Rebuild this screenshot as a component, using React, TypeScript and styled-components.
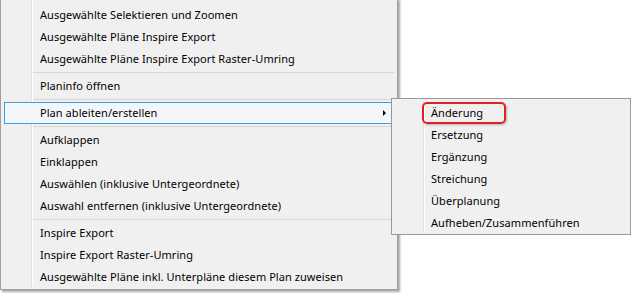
import React from "react";
import styled, { createGlobalStyle } from "styled-components";

const GlobalStyle = createGlobalStyle`
  html, body {
    margin: 0;
    padding: 0;
    background: #ffffff;
  }
  body {
    font-family: "Noto Sans", "Open Sans", sans-serif;
    font-size: 11px;
    letter-spacing: 0.06px;
    color: #000;
  }
`;

type Entry = { label: string; sub?: boolean; active?: boolean } | "sep";

const mainEntries: Entry[] = [
  { label: "Ausgewählte Selektieren und Zoomen" },
  { label: "Ausgewählte Pläne Inspire Export" },
  { label: "Ausgewählte Pläne Inspire Export Raster-Umring" },
  "sep",
  { label: "Planinfo öffnen" },
  "sep",
  { label: "Plan ableiten/erstellen", sub: true, active: true },
  "sep",
  { label: "Aufklappen" },
  { label: "Einklappen" },
  { label: "Auswählen (inklusive Untergeordnete)" },
  { label: "Auswahl entfernen (inklusive Untergeordnete)" },
  "sep",
  { label: "Inspire Export" },
  { label: "Inspire Export Raster-Umring" },
  { label: "Ausgewählte Pläne inkl. Unterpläne diesem Plan zuweisen" },
];

const subEntries = [
  "Änderung",
  "Ersetzung",
  "Ergänzung",
  "Streichung",
  "Überplanung",
  "Aufheben/Zusammenführen",
];

const App: React.FC = () => {
  return (
    <Screen>
      <GlobalStyle />
      <MainMenu>
        <Gutter $left={28} />
        {mainEntries.map((e, i) =>
          e === "sep" ? (
            <Separator key={i} />
          ) : (
            <Item key={i} $active={e.active}>
              <Label>{e.label}</Label>
              {e.sub && <Arrow />}
            </Item>
          )
        )}
      </MainMenu>
      <SubMenu>
        <Gutter $left={29} />
        {subEntries.map((label, i) => (
          <SubItem key={label}>
            {i === 0 && <Marker />}
            <Label>{label}</Label>
          </SubItem>
        ))}
      </SubMenu>
    </Screen>
  );
};

export default App;

const Screen = styled.div`
  display: flex;
  align-items: flex-start;
  width: 634px;
  height: 295px;
  overflow: hidden;
`;

const MainMenu = styled.div`
  position: relative;
  flex: none;
  width: 396px;
  margin-top: -2px;
  padding: 5px 0 1px;
  background: #f0f0f0;
  border: 1px solid #a0a0a0;
  box-shadow: 2px 2px 2px rgba(0, 0, 0, 0.35);
`;

const Gutter = styled.div<{ $left: number }>`
  position: absolute;
  top: 2px;
  bottom: 2px;
  left: ${(p) => p.$left + 2}px;
  width: 1px;
  background: #e2e2e2;
  border-right: 1px solid #ffffff;
`;

const Item = styled.div<{ $active?: boolean }>`
  position: relative;
  display: flex;
  align-items: center;
  height: 22px;
  box-sizing: border-box;
  margin: 0 4px 0 3px;
  padding: 0 6px 0 35px;
  border: 1px solid ${(p) => (p.$active ? "#3d9ee0" : "transparent")};
  background: ${(p) => (p.$active ? "#f4f7f9" : "transparent")};
`;

const Label = styled.span`
  white-space: nowrap;
  line-height: 22px;
  margin-top: -1px;
`;

const Arrow = styled.span`
  margin-left: auto;
  width: 0;
  height: 0;
  border-top: 3px solid transparent;
  border-bottom: 3px solid transparent;
  border-left: 3px solid #000;
`;

const Separator = styled.div`
  height: 5px;
  margin-left: 32px;
  margin-right: 3px;
  display: flex;
  align-items: center;

  &::after {
    content: "";
    flex: 1;
    height: 1px;
    background: #d7d7d7;
  }
`;

const SubMenu = styled.div`
  position: relative;
  flex: none;
  width: 238px;
  margin-top: 98px;
  margin-left: -7px;
  padding: 3px 0 0;
  background: #f0f0f0;
  border: 1px solid #999999;
`;

const SubItem = styled.div`
  position: relative;
  display: flex;
  align-items: center;
  height: 22px;
  padding-left: 39px;
`;

const Marker = styled.span`
  position: absolute;
  left: 30px;
  top: 0;
  width: 84px;
  height: 22px;
  box-sizing: border-box;
  border: 2px solid #e3202a;
  border-radius: 5px;
  box-shadow: 1px 1px 2px rgba(0, 0, 0, 0.25);
`;
